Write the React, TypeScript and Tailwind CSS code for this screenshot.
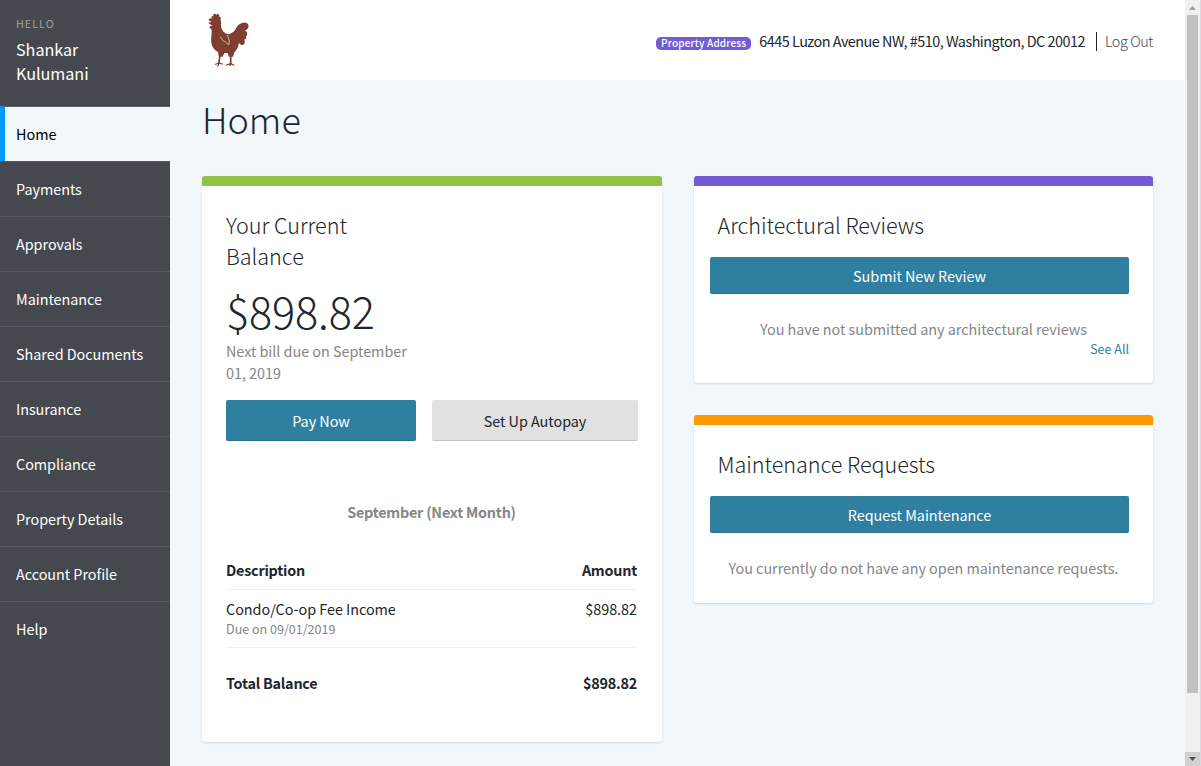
import React from 'react';

const navItems = [
  'Home',
  'Payments',
  'Approvals',
  'Maintenance',
  'Shared Documents',
  'Insurance',
  'Compliance',
  'Property Details',
  'Account Profile',
  'Help',
];

function Rooster() {
  return (
    <svg width="41" height="54" viewBox="0 0 41 54" className="block" aria-hidden="true">
      <g fill="#7e3f31">
        <path d="M4.5 5.5C3 5 3.2 2.5 5.2 3C4.600 1 7.400 -.2 8.300 1.800C9.500 .2 12 1.200 11 3.400C13 3.500 13.500 6 12.200 7C13.800 8.500 13.200 10.500 12.800 11.500C13 15.500 14.500 18.500 17.500 20.300C19 21 20.500 21.500 22.500 20.500C26 19 27 17 28.500 14.500C30 11.500 33 9.300 37 9.400C40 9.700 41.200 12 40.300 14.500C39.700 16 38.600 17.300 36.500 17.800C39.500 18 40.200 21.500 38 23.300C38.500 25 38 26.500 36.200 26.400C37.200 28.500 37 31.200 34.800 32C32.800 32.300 31.800 31 31 30C30 34.500 28.500 37.500 26.300 39.500L25 43.800H20.700L19.900 40.300L16.500 40L14.300 43.900L10.700 43.200L10 39C6 37 3.700 33.500 3.200 29C2.800 25 3.700 22 3.700 18.500L3.200 15.500C1.200 16 1 13.800 2.500 13L4.500 12.600L2.400 11.500C1.200 11 .8 10.500 .6 9.800L3.900 8.800C2.200 8.600 .8 7.500 .6 6.300C1.500 5.200 3 5 4.500 5.500Z" />
      </g>
      <g fill="none" stroke="#7e3f31" strokeLinecap="round" strokeLinejoin="round">
        <path d="M12 42L10.800 50.500M22.700 43V51" strokeWidth="1.700" />
        <path d="M7.500 51.300L10.800 50L14.300 51M10.800 50.500L9.800 53M18.400 52L22.700 50.600L26 52.200M22.500 50.600L22 52.600" strokeWidth="1.200" />
      </g>
      <path d="M12.500 23.700C13.500 26.500 14.500 27.300 16.200 28.200C17.800 29.200 18.800 31 21 31.500L21.300 27C20.300 25.200 19.700 23.500 19.800 21.500" fill="none" stroke="#f0dcd5" strokeWidth=".75" />
    </svg>
  );
}

function Card({ bar, children, className = '' }: { bar: string; children: React.ReactNode; className?: string }) {
  return (
    <section className={`overflow-hidden rounded-[3px] bg-white shadow-[0_1px_2px_rgba(60,80,95,0.18)] ${className}`}>
      <div className={`h-[10px] ${bar}`} />
      {children}
    </section>
  );
}

function RequestCard({ bar, title, action, message, children, className }: {
  bar: string; title: string; action: string; message: string; children?: React.ReactNode; className: string;
}) {
  return (
    <Card bar={bar} className={className}>
      <div className="flex flex-col pt-[23px] pr-6 pl-4">
        <h2 className="pl-[7.5px] text-[21.6px] leading-[31px] font-light tracking-[-0.05px]">{title}</h2>
        <button className="mt-[17px] h-[37px] rounded-[2px] border-b border-[#2a7390] bg-[#2f80a0] pt-[2px] leading-[20px] text-white">{action}</button>
        <p className="mt-[24px] pl-2 text-center leading-[22px] text-[#868686]">{message}</p>
        {children}
      </div>
    </Card>
  );
}

export default function App() {
  return (
    <div className="flex h-[766px] w-[1201px] overflow-hidden bg-[#f1f7fa] font-['Noto_Sans_CJK_SC',sans-serif] text-[14.4px] tracking-[-0.035px] text-[#20262c]">
      <aside className="flex w-[170px] shrink-0 flex-col bg-[#45494f] text-white">
        <div className="h-[106px] px-4 pt-[15px]">
          <div className="text-[10.8px] leading-4 tracking-[1px] text-[#a0a2a5]">HELLO</div>
          <div className="mt-1.5 text-[16.2px] leading-6">
            Shankar
            <br />
            Kulumani
          </div>
        </div>
        <nav className="flex flex-col">
          {navItems.map((item, i) => (
            <a
              key={item}
              className={
                i === 0
                  ? 'flex h-[55px] items-center border-t border-l-[5px] border-t-[#5c6066] border-l-[#009dff] bg-[#f1f7fa] bg-clip-padding pl-[11px] text-black'
                  : 'flex h-[55px] items-center border-t border-[#575b60] pl-4'
              }
            >
              {item}
            </a>
          ))}
        </nav>
      </aside>

      <div className="flex min-w-0 flex-1 flex-col">
        <header className="flex h-20 items-start justify-between bg-white pr-8 pl-[38px]">
          <div className="pt-[13px]"><Rooster /></div>
          <div className="flex h-[82px] items-center">
            <span className="mt-[5px] flex h-[13px] items-center rounded-[5px] bg-[#735bd2] px-[5px] pb-[2px] text-[10px] font-medium tracking-[0.18px] text-white">Property Address</span>
            <span className="ml-2 tracking-[-0.5px]">6445 Luzon Avenue NW, #510, Washington, DC 20012</span>
            <span className="ml-[11px] h-[19px] w-px bg-[#20262c]" />
            <a className="ml-2 font-light tracking-[-0.4px] text-[#454a50]">Log Out</a>
          </div>
        </header>

        <main className="px-8 pt-3">
          <h1 className="h-[84px] text-[36px] leading-[53px] font-light">Home</h1>
          <div className="flex items-start gap-8">
            <Card bar="bg-[#90c246]" className="h-[566px] w-[460px] shrink-0">
              <div className="pt-[23px] pr-6 pl-6">
                <h2 className="w-[150px] text-[21.6px] leading-[31px] font-light tracking-[-0.03px]">Your Current Balance</h2>
                <div className="mt-[12px] text-[43.2px] leading-[54px] font-light tracking-[-0.1px]">$898.82</div>
                <p className="mt-[3px] w-[190px] leading-[22px] text-[#868686]">Next bill due on September 01, 2019</p>
                <div className="mt-[16px] flex gap-4">
                  <button className="h-[41px] w-[190px] rounded-[2px] border-b border-[#2a7390] bg-[#2f80a0] pt-[2px] text-white">Pay Now</button>
                  <button className="h-[41px] w-[206px] rounded-[2px] border-b border-[#c4c4c4] bg-[#e1e1e1] pt-[2px]">Set Up Autopay</button>
                </div>
                <div className="mt-[60px] pr-px text-center leading-[22px] font-bold tracking-[-0.24px] text-[#868686]">September (Next Month)</div>
                <div className="mt-[36px] mr-px flex h-[31px] justify-between border-b border-[#edf0f2] leading-[22px] font-bold tracking-[-0.24px]">
                  <span>Description</span>
                  <span>Amount</span>
                </div>
                <div className="mr-px flex h-[58px] justify-between border-b border-[#edf0f2] pt-[8px] leading-[22px]">
                  <div>
                    <div>Condo/Co-op Fee Income</div>
                    <div className="text-[12.6px] leading-[18px] text-[#868686]">Due on 09/01/2019</div>
                  </div>
                  <span>$898.82</span>
                </div>
                <div className="mt-[24px] mr-px flex justify-between leading-[22px] font-bold tracking-[-0.24px]">
                  <span>Total Balance</span>
                  <span>$898.82</span>
                </div>
              </div>
            </Card>

            <div className="flex min-w-0 flex-1 flex-col gap-8">
              <RequestCard bar="bg-[#735bd2]" title="Architectural Reviews" action="Submit New Review" message="You have not submitted any architectural reviews" className="h-[207px]">
                <a className="text-right text-[12.6px] leading-[18px] text-[#2f80a0]">See All</a>
              </RequestCard>
              <RequestCard bar="bg-[#ff9800]" title="Maintenance Requests" action="Request Maintenance" message="You currently do not have any open maintenance requests." className="h-[188px]" />
            </div>
          </div>
        </main>
      </div>

      <div className="flex w-4 shrink-0 flex-col border-r border-[#dcdce0] bg-[#f0f0f0]">
        <div className="flex h-[15px] items-center justify-center">
          <svg width="7" height="4" viewBox="0 0 7 4"><path d="M0 4L3.500 0L7 4Z" fill="#a0a0a0" /></svg>
        </div>
        <div className="mx-[2px] h-[678px] bg-[#c1c1c1]" />
        <div className="mt-auto flex h-[14px] items-center justify-center bg-[#d1d1d1]">
          <svg width="7" height="4" viewBox="0 0 7 4"><path d="M0 0L3.500 4L7 0Z" fill="#505050" /></svg>
        </div>
      </div>
    </div>
  );
}
